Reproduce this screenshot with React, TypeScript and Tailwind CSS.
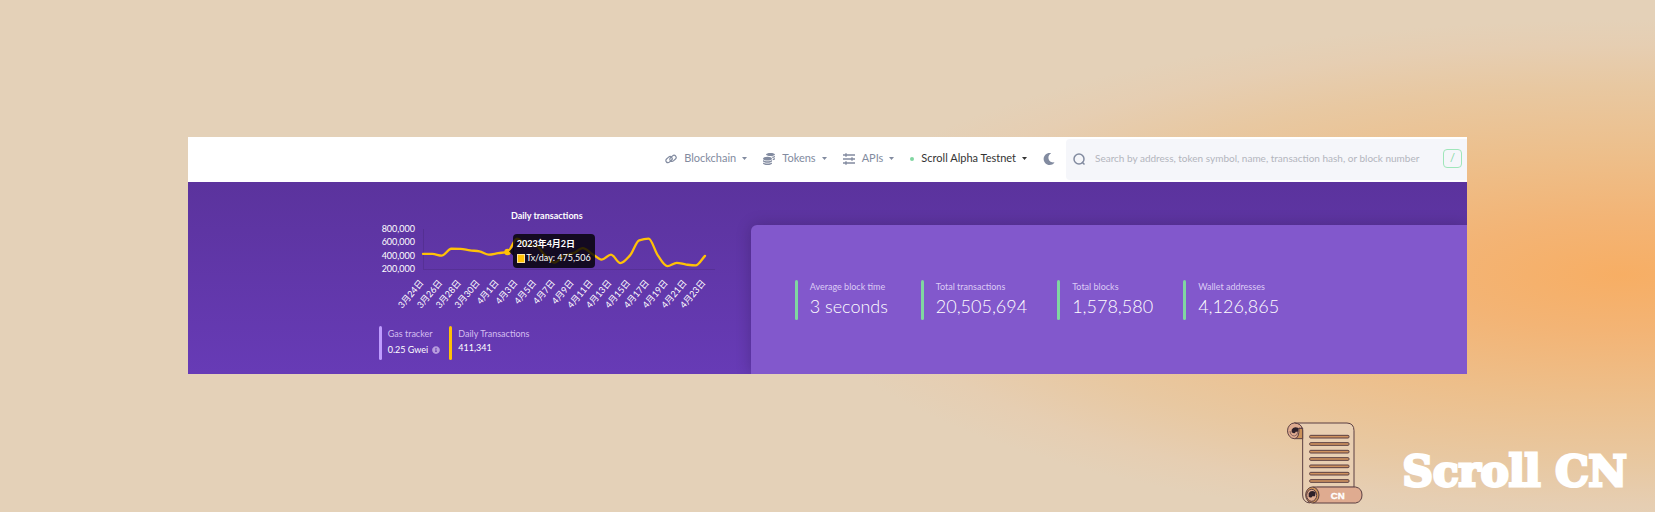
import React from "react";
import { FaCoins, FaInfoCircle, FaMoon } from "react-icons/fa";

const daily = [
  425000, 425000, 400000, 503000, 500000, 478000, 465000, 415000, 437000, 455000,
  655000, 560000, 550000, 400000, 295000, 400000, 436000, 512000, 425000, 340000,
  415000, 288000, 400000, 630000, 655000, 400000, 242000, 292000, 265000, 252000, 396000,
];

const yTicks = [800000, 600000, 400000, 200000];

const X0 = 44;
const STEP = 9.4;
const toX = (i: number) => X0 + i * STEP;
const toY = (v: number) => 10 + ((800000 - v) / 200000) * 13.3;

const dayLabel = (i: number) => (i < 8 ? `3月${24 + i}日` : `4月${i - 7}日`);

function linePath() {
  const n = daily.length;
  const y = daily.map(toY);
  const slope = y.map((_, i) => {
    if (i === 0 || i === n - 1) return 0;
    const a = y[i] - y[i - 1];
    const b = y[i + 1] - y[i];
    return a * b <= 0 ? 0 : (2 * a * b) / (a + b);
  });
  slope[n - 1] = y[n - 1] - y[n - 2];
  let d = `M${toX(0)},${y[0]}`;
  for (let i = 1; i < n; i++) {
    d += ` C${toX(i - 1) + STEP / 3},${y[i - 1] + slope[i - 1] / 3} ${toX(i) - STEP / 3},${y[i] - slope[i] / 3} ${toX(i)},${y[i]}`;
  }
  return d;
}

function LinkIcon() {
  return (
    <svg viewBox="0 0 24 24" className="h-3 w-3" fill="none" stroke="currentColor" strokeWidth="2.4" aria-hidden="true">
      <rect x="1" y="9" width="14" height="8.5" rx="4.2" transform="rotate(-42 8 13.200)" />
      <rect x="9" y="6.5" width="14" height="8.5" rx="4.2" transform="rotate(-42 16 10.800)" />
    </svg>
  );
}

function ApiIcon() {
  return (
    <svg viewBox="0 0 24 24" className="h-3 w-3" fill="none" stroke="currentColor" strokeWidth="2.8" aria-hidden="true">
      <path d="M0 4h24M0 12h24M0 20h24M6 0.5v7M18 8.5v7M6 16.5v7" />
    </svg>
  );
}

function Caret() {
  return (
    <svg viewBox="0 0 10 6" className="ml-1.5 h-[3px] w-[5px]" fill="currentColor" aria-hidden="true">
      <path d="M0 0h10L5 6z" />
    </svg>
  );
}

function NavItem({ icon, label }: { icon: React.ReactNode; label: string }) {
  return (
    <button type="button" className="flex items-center whitespace-nowrap text-[#828ba0]">
      {icon}
      <span className="ml-[7px]">{label}</span>
      <Caret />
    </button>
  );
}

function Header() {
  return (
    <header className="flex h-[45px] items-center justify-end bg-white">
      <nav className="flex items-center gap-4 pb-0.5 text-[11px]">
        <NavItem icon={<LinkIcon />} label="Blockchain" />
        <NavItem icon={<FaCoins className="h-3 w-3" />} label="Tokens" />
        <NavItem icon={<ApiIcon />} label="APIs" />
        <button type="button" className="flex items-center whitespace-nowrap text-[#333333]">
          <span className="mr-[7px] h-1 w-1 rounded-full bg-[#80d6a1]" />
          Scroll Alpha Testnet
          <Caret />
        </button>
        <button type="button" aria-label="Dark mode" className="text-[#828ba0]">
          <FaMoon className="h-3 w-3" />
        </button>
      </nav>
      <label className="ml-[11px] flex h-[41px] w-[401px] items-center rounded-l-sm bg-[#f5f6fa] pr-[5px] pb-0.5 pl-[7px] text-[10px]">
        <svg viewBox="0 0 24 24" className="h-3 w-3 shrink-0 text-[#828ba0]" fill="none" stroke="currentColor" strokeWidth="3" aria-hidden="true">
          <circle cx="12" cy="12" r="10" />
          <path d="M18 18l5 5" />
        </svg>
        <input
          type="text"
          aria-label="Search"
          placeholder="Search by address, token symbol, name, transaction hash, or block number"
          className="ml-2.5 min-w-0 flex-1 bg-transparent outline-none placeholder:text-[#b3b5bd]"
        />
        <kbd className="ml-1.5 flex h-[19px] w-[19px] items-center justify-center rounded border border-[#9fe6ba] font-[Lato,sans-serif] text-[11px] text-[#80d6a1]">
          /
        </kbd>
      </label>
    </header>
  );
}

function Chart() {
  return (
    <figure>
      <figcaption className="text-center text-[9px] leading-3 font-bold text-white">Daily transactions</figcaption>
      <div className="relative mt-[-3px]">
        <svg viewBox="0 0 336 94" className="block h-[94px] w-[336px]" role="img" aria-label="Daily transactions">
          <path d="M44.500 10V50.500H336" fill="none" stroke="#000" strokeOpacity="0.1" />
          {yTicks.map((v) => (
            <text key={v} x="36" y={toY(v) + 3} textAnchor="end" fill="#fff" fontSize="9">
              {v.toLocaleString("en-US")}
            </text>
          ))}
          {daily.map((_, i) =>
            i % 2 === 0 ? (
              <text key={i} transform={`translate(${toX(i) + 1} 64) rotate(-50)`} textAnchor="end" fill="#fff" fontSize="9">
                {dayLabel(i)}
              </text>
            ) : null
          )}
          <path d={linePath()} fill="none" stroke="#ffc107" strokeWidth="2.3" strokeLinejoin="round" strokeLinecap="round" />
          <circle cx={toX(9)} cy={toY(daily[9])} r="3.300" fill="#ffc107" />
          <path d="M130 32.500l4.500-4.500v9z" fill="#000" fillOpacity="0.8" />
        </svg>
        <div className="absolute top-[15px] left-[134px] h-[34px] w-[82px] rounded bg-black/80 px-1 pt-[3px] text-[9px] leading-[14px] whitespace-nowrap text-white">
          <div className="font-bold">2023年4月2日</div>
          <div className="flex items-center">
            <span className="mr-px h-[9px] w-[9px] border border-white/60 bg-[#ffc107]" />
            Tx/day: 475,506
          </div>
        </div>
      </div>
    </figure>
  );
}

const stats = [
  ["Average block time", "3 seconds"],
  ["Total transactions", "20,505,694"],
  ["Total blocks", "1,578,580"],
  ["Wallet addresses", "4,126,865"],
];

function Dashboard() {
  return (
    <div className="flex h-[192px] bg-linear-to-b from-[#5b339d] to-[#673bb6]">
      <section className="flex w-[44%] shrink-0 flex-col items-end pt-7 pr-9">
        <div className="w-[336px]">
          <Chart />
          <div className="mt-[13px] flex gap-[9px] text-[9px] leading-[14px] whitespace-nowrap">
            <div className="flex h-[34px] gap-1.5">
              <span className="w-[3px] rounded-full bg-[#bf9cff]" />
              <div className="pt-px">
                <div className="text-[#d3bdf0]">Gas tracker</div>
                <div className="mt-0.5 flex items-center gap-1 text-white">
                  0.25 Gwei <FaInfoCircle className="h-2 w-2 text-[#b79ddd]" />
                </div>
              </div>
            </div>
            <div className="flex h-[34px] gap-1.5">
              <span className="w-[3px] rounded-full bg-[#ffc107]" />
              <div className="pt-px">
                <div className="text-[#d3bdf0]">Daily Transactions</div>
                <div className="text-white">411,341</div>
              </div>
            </div>
          </div>
        </div>
      </section>
      <section className="mt-[43px] flex flex-1 items-center gap-[30px] rounded-tl-md bg-[#8258cc] pl-11 shadow-[0_0_16px_rgba(0,0,0,0.2)]">
        {stats.map(([label, value]) => (
          <div key={label} className="flex h-10 min-w-24 gap-3 whitespace-nowrap">
            <span className="w-[3px] rounded-full bg-[#80d6a1]" />
            <div>
              <div className="text-[9px] leading-[14px] text-[#dccbf5]">{label}</div>
              <div className="text-[18px] leading-6 font-light text-white">{value}</div>
            </div>
          </div>
        ))}
      </section>
    </div>
  );
}

function ScrollLogo() {
  return (
    <svg viewBox="56 38 228 246" className="h-[82px] w-[76px]" fill="none" stroke="#5b3f42" strokeWidth="3" aria-hidden="true">
      <path d="M78 41H236Q257 42 257 64V234H146L124 281Q103 278 103 257V64Q100 43 78 41Z" fill="#e9cfb2" />
      <path d="M78 88H103V56L90 58Z" fill="#cb9259" />
      <path d="M78 41Q100 43 101 58L92 56Q93 88 78 88A20 23 0 0 1 78 41Z" fill="#dfab90" />
      <path d="M70 61Q75 49 91 56L89 67H82Q80 75 70 69Z" fill="#2e2029" stroke="none" />
      <path d="M89 67Q87 79 78 80Q66 79 65 65" strokeWidth="2" />
      {[82, 104, 127, 149, 171, 193, 215].map((y) => (
        <rect key={y} x="124" y={y - 4} width="118" height="8" rx="3" fill="#cf925f" />
      ))}
      <path d="M133 233H262Q281 237 281 257T262 281H133Z" fill="#dfab90" />
      <ellipse cx="132" cy="257" rx="20" ry="24" fill="#cb9259" />
      <ellipse cx="130" cy="258" rx="15" ry="18" fill="#e1ac91" />
      <path d="M121 252Q128 240 142 249L140 261H132Q130 268 121 262Z" fill="#2e2029" stroke="none" />
      <text x="208" y="269" textAnchor="middle" fill="#fff" stroke="#fff" strokeWidth="1" fontSize="29" fontWeight="700" fontFamily="Liberation Sans Narrow, Liberation Sans, sans-serif">
        CN
      </text>
    </svg>
  );
}

export default function App() {
  return (
    <div className="flex min-h-screen flex-col bg-[#e4d1b8] bg-[radial-gradient(ellipse_830px_255px_at_98%_275px,#f7ae64_0%,#f3b475_22%,#edbf8b_48%,#e8c8a1_74%,#e6ceb2_90%,#e4d1b8_100%)] font-[Lato,'Noto_Sans_CJK_SC',sans-serif]">
      <main className="px-[188px] pt-[137px]">
        <div className="overflow-hidden">
          <Header />
          <Dashboard />
        </div>
      </main>
      <footer className="mt-auto flex items-end justify-end gap-10 pr-7 pb-2">
        <ScrollLogo />
        <div className="pb-1.5 font-['DejaVu_Serif',serif] text-[42px] leading-[52px] font-bold whitespace-nowrap text-white [-webkit-text-stroke:3px_white]">
          Scroll CN
        </div>
      </footer>
    </div>
  );
}
